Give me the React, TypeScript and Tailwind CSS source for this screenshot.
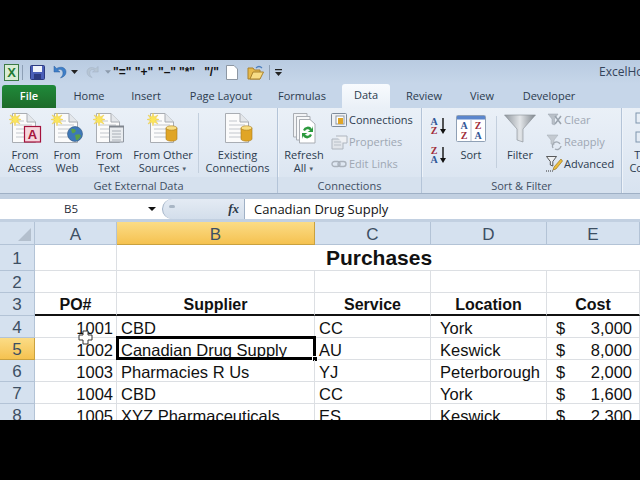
const uiFont = "[font-family:'Open_Sans','Noto_Sans',sans-serif]";

function Spark() {
  return (
    <g transform="translate(2 2)">
      <path d="M6 0 L7 4 L11 2 L8.5 5.5 L12 6.5 L8.5 7.5 L11 11 L7 9 L6 13 L5 9 L1 11 L3.5 7.5 L0 6.5 L3.5 5.5 L1 2 L5 4 Z" fill="#fbe55b" stroke="#e8c84a" strokeWidth="0.5" />
    </g>
  );
}

function Page({ x = 5 }: { x?: number }) {
  return (
    <g>
      <path d={`M${x + 0.5} 2.5 H${x + 15} L${x + 23.5} 11 V31.5 H${x + 0.5} Z`} fill="#fbfbfb" stroke="#a9adb3" />
      <path d={`M${x + 15} 2.5 V11 H${x + 23.5}`} fill="#e4e7eb" stroke="#a9adb3" />
      <path d={`M${x + 4} 10 H${x + 12} M${x + 4} 14 H${x + 20} M${x + 4} 18 H${x + 20} M${x + 4} 22 H${x + 20} M${x + 4} 26 H${x + 20}`} stroke="#c4c8ce" strokeWidth="1.2" />
    </g>
  );
}

function Cylinder({ x, y }: { x: number; y: number }) {
  return (
    <g>
      <path d={`M${x} ${y + 2} V${y + 13} a5.5 2.2 0 0 0 11 0 V${y + 2} Z`} fill="#e0a526" stroke="#a87a1c" strokeWidth="0.6" />
      <ellipse cx={x + 5.5} cy={y + 2} rx="5.5" ry="2.2" fill="#f8dd82" stroke="#a87a1c" strokeWidth="0.6" />
    </g>
  );
}

function DocIcon({ kind, spark = true }: { kind: "access" | "web" | "text" | "db"; spark?: boolean }) {
  return (
    <svg width="36" height="34" viewBox="0 0 36 34">
      <Page />
      {spark && <Spark />}
      {kind === "access" && (
        <g>
          <rect x="17.5" y="15.5" width="16" height="15.5" fill="#f6d5dc" stroke="#a5123c" strokeWidth="1.2" />
          <text x="25.5" y="28" textAnchor="middle" fontFamily="Liberation Sans" fontWeight="700" fontSize="13" fill="#a5123c">A</text>
        </g>
      )}
      {kind === "web" && (
        <g>
          <circle cx="26" cy="23" r="7.5" fill="#3d78b8" stroke="#33567d" strokeWidth="0.6" />
          <path d="M22 18 Q26 17 27 20 Q25 23 23 22 Z M26 24 Q31 22 32 25 Q29 30 27 29 Z" fill="#5aa04a" />
        </g>
      )}
      {kind === "text" && (
        <g>
          <path d="M18.5 15.5 H32.5 V31 H18.5 Z" fill="#e9ecef" stroke="#9097a0" />
          <path d="M18 15.5 H33" stroke="#80868e" strokeWidth="2" />
          <path d="M21 20 H30 M21 23 H30 M21 26 H30 M21 29 H30" stroke="#a8aeb6" />
        </g>
      )}
      {kind === "db" && <Cylinder x={21} y={15} />}
    </svg>
  );
}

function BigButton({ icon, lines, width, arrow }: { icon: React.ReactNode; lines: string[]; width: number; arrow?: boolean }) {
  return (
    <div className="flex flex-col items-center pt-[3px] shrink-0" style={{ width }}>
      <div className="h-[36px] flex items-start justify-center">{icon}</div>
      <div className="mt-[1px] text-center leading-[13px] whitespace-nowrap">
        {lines.map((l, i) => (
          <div key={l}>
            {l}
            {arrow && i === lines.length - 1 && <span className="text-[6px] align-middle ml-[2px] text-[#52606f]">▼</span>}
          </div>
        ))}
      </div>
    </div>
  );
}

function SmallRow({ icon, label, off }: { icon: React.ReactNode; label: string; off?: boolean }) {
  return (
    <div className={`flex items-center h-[22px] whitespace-nowrap ${off ? "text-[#9ea7b3]" : ""}`}>
      <div className="w-[18px] h-[18px] flex items-center justify-center mr-[1px]">{icon}</div>
      {label}
    </div>
  );
}

function Group({ label, width, children }: { label: string; width: number; children: React.ReactNode }) {
  return (
    <div className="flex flex-col shrink-0 border-r border-[#b4c4d8] shadow-[1px_0_0_#eef3f9]" style={{ width }}>
      <div className="flex h-[69px]">{children}</div>
      <div className="h-[16px] leading-[17px] text-center text-[#3f4f63] bg-[#d6e1ee]">{label}</div>
    </div>
  );
}

function SortIcon({ top, bottom }: { top: string; bottom: string }) {
  return (
    <svg width="18" height="20" viewBox="0 0 18 20">
      <text x="5" y="9" textAnchor="middle" fontFamily="Liberation Serif" fontWeight="700" fontSize="10" fill={top === "A" ? "#2f5597" : "#a02b3a"}>{top}</text>
      <text x="5" y="18" textAnchor="middle" fontFamily="Liberation Serif" fontWeight="700" fontSize="10" fill={bottom === "A" ? "#2f5597" : "#a02b3a"}>{bottom}</text>
      <path d="M14 2 V16" stroke="#111" strokeWidth="1.4" />
      <path d="M11 13 H17 L14 18 Z" fill="#111" />
    </svg>
  );
}

const quickTexts = [
  { t: '"="', w: "w-[18px]" },
  { t: '"+"', w: "w-[26px]" },
  { t: '"–"', w: "w-[20px]" },
  { t: '"*"', w: "w-[20px]" },
  { t: '"/"', w: "w-[29px]" },
];

const tabs = [
  { t: "Home", w: "w-[66px]" },
  { t: "Insert", w: "w-[48px]" },
  { t: "Page Layout", w: "w-[102px]" },
  { t: "Formulas", w: "w-[60px] mr-[10px]" },
];
const tabsAfter = [
  { t: "Review", w: "w-[68px]" },
  { t: "View", w: "w-[48px]" },
  { t: "Developer", w: "w-[86px]" },
];

const rows = [
  { n: 4, po: "1001", sup: "CBD", svc: "CC", loc: "York", cost: "3,000" },
  { n: 5, po: "1002", sup: "Canadian Drug Supply", svc: "AU", loc: "Keswick", cost: "8,000" },
  { n: 6, po: "1003", sup: "Pharmacies R Us", svc: "YJ", loc: "Peterborough", cost: "2,000" },
  { n: 7, po: "1004", sup: "CBD", svc: "CC", loc: "York", cost: "1,600" },
  { n: 8, po: "1005", sup: "XYZ Pharmaceuticals", svc: "ES", loc: "Keswick", cost: "2,300" },
];

const colsClass = "grid grid-cols-[35px_82px_198px_116px_116px_93px] grid-rows-[100%]";
const rowHead = "flex items-center justify-center pt-[2px] bg-[#d5e1ef] border-r border-b border-[#b3c3d6] text-[#3d4f63] text-[17px]";
const colHead = "flex items-center justify-center pt-[3px] bg-[#d5e1ef] border-r border-b border-[#b3c3d6] text-[#3d4f63] text-[17px]";
const cell = "border-r border-b border-[#dcdfe3] px-[4px] pt-[2px] flex items-center whitespace-nowrap overflow-hidden";
const headCell = "border-r border-[#dcdfe3] pt-[2px] flex items-center justify-center font-bold whitespace-nowrap";

export default function App() {
  return (
    <div className="w-[640px] h-[480px] bg-black overflow-hidden flex flex-col">
      <div className="h-[60px] shrink-0" />
      <div className="h-[360px] shrink-0 overflow-hidden relative bg-white">
        <div className={`${uiFont} text-[11px] text-[#2c3b4e]`}>
          {/* Quick access bar */}
          <div className="h-[24px] flex items-center pl-[4px] bg-gradient-to-b from-[#b9cbe1] to-[#c6d6e9] overflow-hidden">
            <div className="w-[595px] shrink-0 flex items-center">
              <svg width="15" height="17" viewBox="0 0 15 17">
                <rect x="0.5" y="0.5" width="14" height="16" fill="#d9ecd4" stroke="#3b7a45" />
                <text x="7.5" y="13" textAnchor="middle" fontFamily="Liberation Sans" fontWeight="700" fontSize="13" fill="#1e7a34">X</text>
              </svg>
              <div className="w-px h-[15px] bg-[#8d9fb5] ml-[3px] mr-[7px]" />
              <svg width="15" height="15" viewBox="0 0 15 15">
                <rect x="0.5" y="0.5" width="14" height="14" rx="1" fill="#4a5fb8" stroke="#2c3a80" />
                <rect x="3" y="1" width="9" height="6" fill="#f0f3fa" />
                <rect x="4" y="9" width="7" height="5.5" fill="#2c3a80" />
              </svg>
              <svg className="ml-[7px]" width="15" height="14" viewBox="0 0 15 14">
                <path d="M2 1 V7 H8 L5.6 5 C8.5 3.4 11 5 11 8 C11 10 10 11.5 8.5 13 C12 12 14 9.8 14 7 C14 2.8 9.5 0.8 4.6 3.4 Z" fill="#3d7fc9" stroke="#2c5f9c" strokeWidth="0.5" />
              </svg>
              <svg className="ml-[4px]" width="7" height="4" viewBox="0 0 7 4"><path d="M0 0 H7 L3.5 4 Z" fill="#222" /></svg>
              <svg className="ml-[8px]" width="14" height="14" viewBox="0 0 15 14">
                <path d="M13 1 V7 H7 L9.4 5 C6.5 3.4 4 5 4 8 C4 10 5 11.5 6.5 13 C3 12 1 9.8 1 7 C1 2.8 5.5 0.8 10.4 3.4 Z" fill="#b6c5d4" stroke="#9fb0c2" strokeWidth="0.5" />
              </svg>
              <svg className="ml-[5px]" width="6" height="4" viewBox="0 0 7 4"><path d="M0 0 H7 L3.5 4 Z" fill="#8c9bac" /></svg>
              <div className="ml-[2px] flex font-['Liberation_Sans'] font-bold text-[12px] text-[#111] leading-none">
                {quickTexts.map(q => (
                  <div key={q.t} className={`${q.w} text-center whitespace-nowrap`}>{q.t}</div>
                ))}
              </div>
              <svg width="12" height="15" viewBox="0 0 12 15">
                <path d="M0.5 0.5 H8 L11.5 4 V14.5 H0.5 Z" fill="#fff" stroke="#8d97a3" />
              </svg>
              <svg className="ml-[9px]" width="17" height="15" viewBox="0 0 17 15">
                <path d="M1 3 H6 L7.5 5 H13 V14 H1 Z" fill="#e6b94c" stroke="#a9812c" />
                <path d="M3 14 L6 7 H16.5 L13 14 Z" fill="#f7dc85" stroke="#a9812c" />
                <path d="M9 3 Q12 0 15 3" stroke="#4c7fbf" fill="none" strokeWidth="1.2" />
              </svg>
              <div className="w-px h-[15px] bg-[#8d9fb5] ml-[5px] mr-[5px]" />
              <svg width="7" height="7" viewBox="0 0 7 7"><path d="M0 0 H7 V1.2 H0 Z M0 3 H7 L3.5 7 Z" fill="#222" /></svg>
            </div>
            <div className="shrink-0 text-[12px] text-[#33435a] whitespace-nowrap">ExcelHowTo</div>
          </div>

          {/* Tabs */}
          <div className="h-[24px] flex items-end pl-[2px] bg-[#c6d6e9]">
            <div className="w-[54px] h-[23px] pb-[1px] rounded-t-[3px] bg-gradient-to-b from-[#1f8a3a] to-[#1d6b2a] text-white font-semibold flex items-center justify-center">File</div>
            {tabs.map(t => (
              <div key={t.t} className={`${t.w} h-[23px] pb-[1px] flex items-center justify-center whitespace-nowrap`}>{t.t}</div>
            ))}
            <div className="w-[48px] h-[24px] pb-[1px] rounded-t-[3px] bg-gradient-to-b from-[#f8fbfe] to-[#eaf0f7] flex items-center justify-center">Data</div>
            {tabsAfter.map(t => (
              <div key={t.t} className={`${t.w} h-[23px] pb-[1px] flex items-center justify-center whitespace-nowrap`}>{t.t}</div>
            ))}
          </div>

          {/* Ribbon */}
          <div className="h-[85px] flex bg-gradient-to-b from-[#eaf0f7] via-[#e2eaf4] to-[#d8e3f0] overflow-hidden">
            <Group label="Get External Data" width={278}>
              <div className="w-[4px] shrink-0" />
              <BigButton width={42} icon={<DocIcon kind="access" />} lines={["From", "Access"]} />
              <BigButton width={42} icon={<DocIcon kind="web" />} lines={["From", "Web"]} />
              <BigButton width={42} icon={<DocIcon kind="text" />} lines={["From", "Text"]} />
              <BigButton width={66} icon={<DocIcon kind="db" />} lines={["From Other", "Sources"]} arrow />
              <div className="w-px h-[60px] mt-[5px] ml-[2px] bg-[#c3cfdd] shrink-0" />
              <BigButton width={77} icon={<DocIcon kind="db" spark={false} />} lines={["Existing", "Connections"]} />
            </Group>
            <Group label="Connections" width={144}>
              <BigButton width={52} icon={
                <svg width="34" height="34" viewBox="0 0 34 34">
                  <path d="M6.5 2.5 H20 V26 H6.5 Z" fill="#f2f3f5" stroke="#a9adb3" />
                  <path d="M9.5 5.5 H23 V29 H9.5 Z" fill="#f7f8f9" stroke="#a9adb3" />
                  <path d="M12.5 8.5 H23 L28 13 V32 H12.5 Z" fill="#fff" stroke="#a9adb3" />
                  <path d="M16 19 A5 5 0 0 1 25 18 L26 15 V21 H20.5 L23 19.4 A3 3 0 0 0 18 20 Z" fill="#2c9a3e" />
                  <path d="M25 24 A5 5 0 0 1 16 25 L15 28 V22 H20.5 L18 23.6 A3 3 0 0 0 23 23 Z" fill="#2c9a3e" />
                </svg>
              } lines={["Refresh", "All"]} arrow />
              <div className="flex flex-col pt-[1px]">
                <SmallRow label="Connections" icon={
                  <svg width="16" height="15" viewBox="0 0 16 15">
                    <rect x="0.5" y="0.5" width="15" height="13" rx="1" fill="#eef1f5" stroke="#7d8a99" />
                    <rect x="5" y="3" width="8" height="8" fill="#fff" stroke="#8d97a3" />
                    <rect x="7" y="5" width="5" height="6" fill="#e0a526" />
                  </svg>
                } />
                <SmallRow off label="Properties" icon={
                  <svg width="17" height="15" viewBox="0 0 17 15">
                    <path d="M1 4 H12 V14 H1 Z" fill="#e1e5ea" stroke="#aeb5be" />
                    <path d="M5 1 H16 V8 H12" fill="#eef0f3" stroke="#aeb5be" />
                    <path d="M3 7 H10 M3 10 H10" stroke="#b9c0c8" />
                  </svg>
                } />
                <SmallRow off label="Edit Links" icon={
                  <svg width="16" height="8" viewBox="0 0 16 8" fill="none" stroke="#aab2bc" strokeWidth="1.4">
                    <rect x="1" y="1.5" width="8" height="5" rx="2.5" />
                    <rect x="7" y="1.5" width="8" height="5" rx="2.5" />
                  </svg>
                } />
              </div>
            </Group>
            <Group label="Sort & Filter" width={200}>
              <div className="flex flex-col pt-[8px] pl-[7px] gap-[9px] w-[33px] shrink-0">
                <SortIcon top="A" bottom="Z" />
                <SortIcon top="Z" bottom="A" />
              </div>
              <BigButton width={32} icon={
                <svg width="30" height="30" viewBox="0 0 30 30" className="mt-[4px]">
                  <rect x="0.5" y="0.5" width="29" height="26" rx="1" fill="#fff" stroke="#8fa0b5" />
                  <rect x="1" y="1" width="28" height="3.5" fill="#5b86cc" />
                  <path d="M15 5 V26" stroke="#b6c2d0" />
                  <text x="8" y="14" textAnchor="middle" fontFamily="Liberation Serif" fontWeight="700" fontSize="10" fill="#2f5597">A</text>
                  <text x="8" y="24" textAnchor="middle" fontFamily="Liberation Serif" fontWeight="700" fontSize="10" fill="#a02b3a">Z</text>
                  <text x="22" y="14" textAnchor="middle" fontFamily="Liberation Serif" fontWeight="700" fontSize="10" fill="#a02b3a">Z</text>
                  <text x="22" y="24" textAnchor="middle" fontFamily="Liberation Serif" fontWeight="700" fontSize="10" fill="#2f5597">A</text>
                </svg>
              } lines={["Sort"]} />
              <div className="w-px h-[52px] mt-[8px] ml-[9px] bg-[#c3cfdd] shrink-0" />
              <BigButton width={46} icon={
                <svg width="32" height="30" viewBox="0 0 32 30" className="mt-[3px]">
                  <defs>
                    <linearGradient id="funnel" x1="0" x2="1" y1="0" y2="0">
                      <stop offset="0" stopColor="#8f969d" />
                      <stop offset="0.5" stopColor="#e3e6e9" />
                      <stop offset="1" stopColor="#7f868d" />
                    </linearGradient>
                  </defs>
                  <path d="M0.5 1 H31.5 L19 15 V28 L13 26 V15 Z" fill="url(#funnel)" stroke="#868d94" strokeWidth="0.6" />
                </svg>
              } lines={["Filter"]} />
              <div className="flex flex-col pt-[1px] pl-[2px]">
                <SmallRow off label="Clear" icon={
                  <svg width="15" height="14" viewBox="0 0 15 14">
                    <path d="M1 1 H11 L7.5 6 V12 L5 11 V6 Z" fill="#b9c0c8" stroke="#9aa3ad" strokeWidth="0.5" />
                    <path d="M8 3 L14 11 M14 3 L8 11" stroke="#9aa3ad" strokeWidth="1.5" />
                  </svg>
                } />
                <SmallRow off label="Reapply" icon={
                  <svg width="16" height="17" viewBox="0 0 16 17">
                    <path d="M1 1 H12 L8 6 V11 L5 10 V6 Z" fill="#c4cad1" stroke="#a2aab3" strokeWidth="0.5" />
                    <path d="M7 14 A4 4 0 0 1 14 10 M15 12 A4 4 0 0 1 9 15" stroke="#a2aab3" strokeWidth="1.4" fill="none" />
                  </svg>
                } />
                <SmallRow label="Advanced" icon={
                  <svg width="17" height="16" viewBox="0 0 17 16">
                    <path d="M0.5 0.5 H10.5 L6.8 5.5 V10 L4.3 9 V5.5 Z" fill="#eef0f2" stroke="#333" strokeWidth="0.8" />
                    <path d="M15 3 L8 11 L7 14 L10 13 L16.5 5 Z" fill="#edbe3e" stroke="#8e6a14" strokeWidth="0.6" />
                    <path d="M0 15 H7" stroke="#333" strokeDasharray="1 1" />
                  </svg>
                } />
              </div>
            </Group>
            <div className="pl-[5px] shrink-0 w-[60px] flex flex-col">
              <div className="h-[69px] flex flex-col items-center w-[50px]">
                <div className="pt-[3px] h-[39px] flex items-start justify-center">
                  <svg className="ml-[-22px]" width="12" height="32" viewBox="0 0 12 32" fill="none" stroke="#7f95ad">
                    <rect x="1" y="2" width="10" height="10" />
                    <rect x="1" y="21" width="10" height="10" />
                  </svg>
                </div>
                <div className="mt-[1px] text-center leading-[13px] whitespace-nowrap">
                  <div>Text to</div>
                  <div>Columns</div>
                </div>
              </div>
            </div>
          </div>

          {/* Formula bar */}
          <div className="h-[29px] pt-[5px] pb-[4px] bg-[#c2d0e1] border-t border-[#9fb0c5]">
            <div className="h-[20px] flex bg-white">
              <div className="w-[162px] shrink-0 relative flex items-center justify-center pr-[20px] text-[#1f2a38] text-[11.5px]">
                B5
                <svg className="absolute right-[6px] top-[8px]" width="8" height="4" viewBox="0 0 8 4"><path d="M0 0 H8 L4 4 Z" fill="#111" /></svg>
              </div>
              <div className="relative w-[83px] shrink-0 rounded-l-[12px] bg-gradient-to-b from-[#e4ebf4] to-[#d3deeb] border-l border-[#9fb0c5] border-r flex items-center justify-end pr-[5px] font-['Liberation_Serif'] italic font-bold text-[13px] text-[#2b3947]">
                <span className="absolute left-[6px] top-[6px] w-[6px] h-[3px] rounded-full bg-[#a9b6c5]" />
                fx
              </div>
              <div className="pl-[9px] text-[13px] leading-[20px] text-[#111]">Canadian Drug Supply</div>
            </div>
          </div>
        </div>

        {/* Sheet */}
        <div className="font-['Liberation_Sans'] text-[16.5px] leading-[20px] text-[#111]">
          <div className={`${colsClass} h-[23px] text-[#3d4f63]`}>
            <div className="bg-[#d5e1ef] border-r border-b border-[#b3c3d6] relative">
              <div className="absolute right-[3px] bottom-[3px] w-0 h-0 border-l-[13px] border-l-transparent border-b-[13px] border-b-[#b3bfcd]" />
            </div>
            <div className={colHead}>A</div>
            <div className="flex items-center justify-center pt-[3px] bg-gradient-to-b from-[#fbdc85] to-[#f5c24f] border-r border-b border-[#c9a13f] text-[17px]">B</div>
            <div className={colHead}>C</div>
            <div className={colHead}>D</div>
            <div className={colHead}>E</div>
          </div>

          <div className={`${colsClass} h-[26px]`}>
            <div className={rowHead}>1</div>
            <div className="border-r border-b border-[#dcdfe3]" />
            <div className="col-span-4 border-b border-[#dcdfe3] flex items-center justify-center font-bold text-[21px] pl-[1px]">Purchases</div>
          </div>

          <div className={`${colsClass} h-[22px]`}>
            <div className={rowHead}>2</div>
            {[0, 1, 2, 3, 4].map(i => <div key={i} className="border-r border-b border-[#dcdfe3]" />)}
          </div>

          <div className={`${colsClass} h-[23px] text-[16px]`}>
            <div className={rowHead}>3</div>
            {["PO#", "Supplier", "Service", "Location", "Cost"].map(h => (
              <div key={h} className={`${headCell} border-b-2 border-b-[#111]`}>{h}</div>
            ))}
          </div>

          {rows.map(r => (
            <div key={r.n} className={`${colsClass} h-[22px]`}>
              {r.n === 5 ? (
                <div className="flex items-center justify-center pt-[2px] bg-gradient-to-b from-[#fbdc85] to-[#f5c24f] border-r border-b border-[#c9a13f] text-[#3d4f63] text-[17px]">5</div>
              ) : (
                <div className={rowHead}>{r.n}</div>
              )}
              <div className={`${cell} justify-end pr-[3px]`}>{r.po}</div>
              <div className={`${cell} relative overflow-visible`}>
                {r.sup}
                {r.n === 5 && (
                  <div className="absolute -left-px -top-[2px] w-[200px] h-[24px] border-[3px] border-black">
                    <div className="absolute -right-[5px] -bottom-[5px] w-[6px] h-[6px] bg-black border border-white" />
                  </div>
                )}
              </div>
              <div className={cell}>{r.svc}</div>
              <div className={`${cell} pl-[9px]`}>{r.loc}</div>
              <div className={`${cell} justify-between pl-[9px] pr-[7px]`}>
                <span>$</span>
                <span>{r.cost}</span>
              </div>
            </div>
          ))}
        </div>

        {/* Excel's plus cursor */}
        <svg className="absolute left-[78px] top-[270px]" width="15" height="15" viewBox="0 0 15 15">
          <path d="M5 1 H10 V5 H14 V10 H10 V14 H5 V10 H1 V5 H5 Z" fill="#fff" stroke="#333" />
        </svg>
      </div>
      <div className="h-[60px] shrink-0" />
    </div>
  );
}
